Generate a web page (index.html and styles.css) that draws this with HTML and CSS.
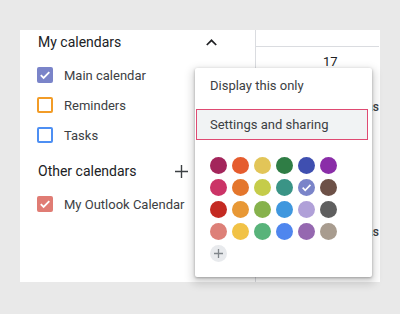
FILE: index.html
```html
<!DOCTYPE html>
<html lang="en">
<head>
    <meta charset="UTF-8">
    <meta name="viewport" content="width=device-width, initial-scale=1.0">
    <title>Calendars</title>
    <link rel="stylesheet" href="styles.css">
</head>
<body>
    <div class="panel">
        <aside class="sidebar">
            <div class="section-head">
                <span>My calendars</span>
                <svg class="chevron" width="11" height="7" viewBox="0 0 11 7">
                    <path d="M0.8 6 L5.5 1.3 L10.2 6" fill="none" stroke="#202124" stroke-width="1.7"/>
                </svg>
            </div>
            <ul class="cal-list">
                <li>
                    <span class="box checked main">
                        <svg width="12" height="12" viewBox="0 0 12 12"><path d="M1.8 6.2 L4.6 9 L10.3 3.2" fill="none" stroke="#fff" stroke-width="1.8"/></svg>
                    </span>
                    Main calendar
                </li>
                <li>
                    <span class="box reminders"></span>
                    Reminders
                </li>
                <li>
                    <span class="box tasks"></span>
                    Tasks
                </li>
            </ul>
            <div class="section-head other">
                <span>Other calendars</span>
                <svg class="plus" width="13" height="13" viewBox="0 0 13 13">
                    <path d="M6.5 0 V13 M0 6.5 H13" fill="none" stroke="#3c4043" stroke-width="1.4"/>
                </svg>
            </div>
            <ul class="cal-list">
                <li>
                    <span class="box checked outlook">
                        <svg width="12" height="12" viewBox="0 0 12 12"><path d="M1.8 6.2 L4.6 9 L10.3 3.2" fill="none" stroke="#fff" stroke-width="1.8"/></svg>
                    </span>
                    My Outlook Calendar
                </li>
            </ul>
        </aside>

        <main class="week">
            <div class="week-head"></div>
            <div class="day-num">17</div>
            <div class="event first">Christmas</div>
            <div class="event second">Christmas</div>
        </main>

        <div class="menu">
            <div class="menu-item">Display this only</div>
            <div class="menu-item focused">Settings and sharing</div>
            <div class="palette">
                <span class="dot" style="background: #a3255b;"></span>
                <span class="dot" style="background: #e55c2e;"></span>
                <span class="dot" style="background: #e2c558;"></span>
                <span class="dot" style="background: #2f7d45;"></span>
                <span class="dot" style="background: #3f4fb0;"></span>
                <span class="dot" style="background: #8a2da8;"></span>

                <span class="dot" style="background: #cb3467;"></span>
                <span class="dot" style="background: #e4762c;"></span>
                <span class="dot" style="background: #c5cc4a;"></span>
                <span class="dot" style="background: #3a9486;"></span>
                <span class="dot" style="background: #7a84c9;">
                    <svg width="11" height="11" viewBox="0 0 12 12"><path d="M1.8 6.2 L4.6 9 L10.3 3.2" fill="none" stroke="#fff" stroke-width="1.8"/></svg>
                </span>
                <span class="dot" style="background: #6d5147;"></span>

                <span class="dot" style="background: #c42a22;"></span>
                <span class="dot" style="background: #e89835;"></span>
                <span class="dot" style="background: #86b24c;"></span>
                <span class="dot" style="background: #3f97de;"></span>
                <span class="dot" style="background: #b0a0d8;"></span>
                <span class="dot" style="background: #5f5f5f;"></span>

                <span class="dot" style="background: #dd8078;"></span>
                <span class="dot" style="background: #f1c246;"></span>
                <span class="dot" style="background: #58b37a;"></span>
                <span class="dot" style="background: #4f86ee;"></span>
                <span class="dot" style="background: #9568b0;"></span>
                <span class="dot" style="background: #a89c8f;"></span>

                <span class="dot add">
                    <svg width="9" height="9" viewBox="0 0 9 9"><path d="M4.5 0 V9 M0 4.5 H9" fill="none" stroke="#80868b" stroke-width="1.3"/></svg>
                </span>
            </div>
        </div>
    </div>
</body>
</html>
```

FILE: styles.css
```css
body {
    margin: 0;
    padding: 30px 20px;
    background: #e9e9e9;
    font-family: Roboto, "Liberation Sans", sans-serif;
    color: #3c4043;
}
.panel {
    position: relative;
    display: flex;
    height: 252px;
    background: #fff;
}
.sidebar {
    width: 235px;
    border-right: 1px solid #dadce0;
}
.section-head {
    display: flex;
    align-items: center;
    justify-content: space-between;
    height: 20px;
    margin-top: 2px;
    padding: 0 38px 0 18px;
    font-size: 14px;
    line-height: 20px;
    color: #202124;
}
.section-head.other {
    margin-top: 11px;
    padding-right: 67px;
}
.cal-list {
    list-style: none;
    margin: 8px 0 0;
    padding: 0;
}
.cal-list li {
    display: flex;
    align-items: center;
    height: 30px;
    padding-left: 17px;
    font-size: 13px;
}
.box {
    display: flex;
    align-items: center;
    justify-content: center;
    width: 16px;
    height: 16px;
    margin-right: 11px;
    border: 2px solid;
    border-radius: 2px;
    box-sizing: border-box;
}
.box.main {
    background: #7a84c9;
    border-color: #7a84c9;
}
.box.reminders {
    border-color: #f29c27;
}
.box.tasks {
    border-color: #4d8ff3;
}
.box.outlook {
    background: #e07c74;
    border-color: #e07c74;
}
.week {
    flex: 1;
    padding-right: 1px;
}
.week-head {
    height: 16px;
    border-bottom: 1px solid #dadce0;
}
.day-num {
    margin-top: 7px;
    padding-left: 67px;
    font-size: 13px;
    line-height: 16px;
    color: #202124;
}
.event {
    font-size: 12px;
    font-weight: 500;
    line-height: 14px;
    text-align: right;
    color: #3c4043;
}
.event.first {
    margin-top: 30px;
}
.event.second {
    margin-top: 111px;
}
.menu {
    position: absolute;
    left: 175px;
    top: 38px;
    width: 177px;
    height: 209px;
    background: #fff;
    border-radius: 2px;
    box-shadow: 0 1px 3px rgba(0, 0, 0, 0.3), 0 4px 8px 3px rgba(0, 0, 0, 0.15);
}
.menu-item {
    height: 36px;
    padding-left: 15px;
    font-size: 13px;
    line-height: 36px;
    color: #3c4043;
}
.menu-item.focused {
    width: 172px;
    height: 31px;
    margin: 5px 0 0 1px;
    padding-left: 13px;
    line-height: 29px;
    border: 1px solid #df4a72;
    background: #f1f3f4;
    box-sizing: border-box;
}
.palette {
    display: grid;
    grid-template-columns: repeat(6, 17px);
    gap: 5px;
    margin-top: 17px;
    padding-left: 15px;
}
.dot {
    display: flex;
    align-items: center;
    justify-content: center;
    width: 17px;
    height: 17px;
    border-radius: 50%;
}
.dot.add {
    background: #e8eaed;
}
```
